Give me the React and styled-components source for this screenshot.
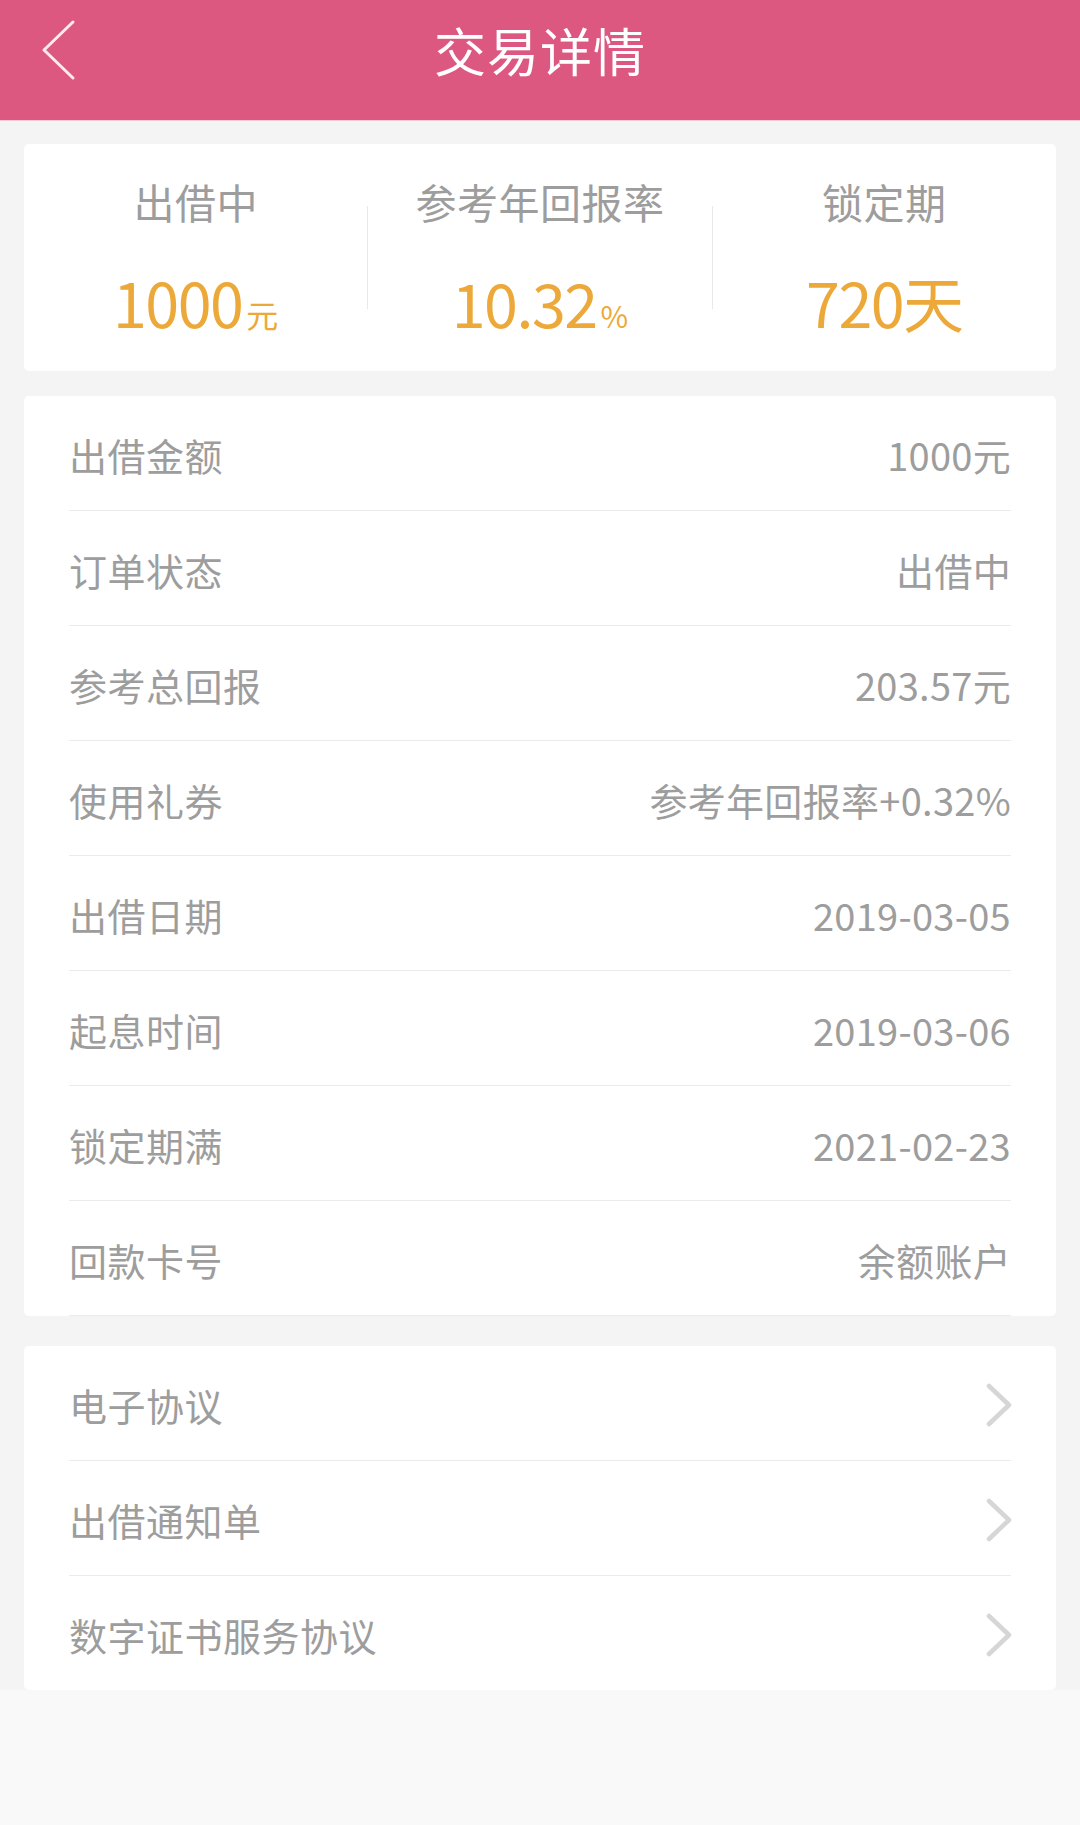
import React from "react";
import styled, { createGlobalStyle } from "styled-components";

const GlobalStyle = createGlobalStyle`
  html, body {
    margin: 0;
    padding: 0;
    background: #f9f9f9;
  }
  body {
    font-family: "Noto Sans CJK SC", "Noto Sans", sans-serif;
    font-weight: 400;
  }
  * { box-sizing: border-box; }
`;

const Page = styled.div`
  width: 1080px;
  min-height: 1825px;
  background: #f9f9f9;
`;

const Header = styled.header`
  height: 121px;
  background: #dd5880;
  display: grid;
  grid-template-columns: 1fr auto 1fr;
  align-items: center;
  padding-bottom: 20px;
  border-bottom: 1px solid #f4c9d6;
`;

const BackButton = styled.button`
  justify-self: start;
  margin-left: 41px;
  padding: 0;
  border: 0;
  background: none;
  width: 36px;
  height: 62px;
  display: flex;
  align-items: center;
  justify-content: center;
  cursor: pointer;
`;

const Title = styled.h1`
  margin: 0;
  font-size: 52px;
  line-height: 1;
  font-weight: 400;
  color: #fff;
  letter-spacing: 1px;
`;

const Main = styled.main`
  background: #f4f4f4;
  padding: 23px 24px 0;
  display: flex;
  flex-direction: column;
`;

const Card = styled.section`
  background: #fff;
  border-radius: 5px;
  margin-bottom: ${(p) => p.$gap || 0}px;
`;

const Summary = styled(Card)`
  height: 227px;
  display: grid;
  grid-template-columns: 1fr 1px 1fr 1px 1fr;
`;

const Stat = styled.div`
  display: flex;
  flex-direction: column;
  align-items: center;
  padding-top: 37px;
`;

const StatLabel = styled.div`
  font-size: 41px;
  line-height: 41px;
  color: #9d9d9d;
  letter-spacing: 0.5px;
`;

const StatValue = styled.div`
  margin-top: 49px;
  font-size: 61px;
  line-height: 61px;
  color: #eca93a;
  white-space: nowrap;
  letter-spacing: -1.5px;
`;

const Unit = styled.span`
  font-size: ${(p) => p.$size || 32}px;
  margin-left: 4px;
  letter-spacing: 0;
`;

const VDivider = styled.div`
  margin-top: 62px;
  height: 103px;
  background: #e8e8e8;
`;

const Row = styled.div`
  height: ${(p) => (p.$last ? 114 : 115)}px;
  margin: 0 45px;
  display: flex;
  align-items: center;
  justify-content: space-between;
  border-bottom: ${(p) => (p.$last ? "none" : "1px solid #ebebeb")};
  font-size: 38px;
  line-height: 1;
  color: #9d9d9d;
  padding-top: 3px;
`;

const RowLabel = styled.span`
  letter-spacing: 0.5px;
`;
const RowValue = styled.span`
  letter-spacing: 0.3px;
`;

const Chevron = styled.svg`
  width: 26px;
  height: 44px;
  margin-right: -1px;
`;

const details = [
  ["出借金额", "1000元"],
  ["订单状态", "出借中"],
  ["参考总回报", "203.57元"],
  ["使用礼券", "参考年回报率+0.32%"],
  ["出借日期", "2019-03-05"],
  ["起息时间", "2019-03-06"],
  ["锁定期满", "2021-02-23"],
  ["回款卡号", "余额账户"],
];

const links = ["电子协议", "出借通知单", "数字证书服务协议"];

export default function App() {
  return (
    <Page>
      <GlobalStyle />
      <Header>
        <BackButton aria-label="返回">
          <svg width="36" height="62" viewBox="0 0 36 62">
            <polyline
              points="32,3 3,31 32,59"
              fill="none"
              stroke="#fde9f0"
              strokeWidth="3"
              strokeLinecap="round"
              strokeLinejoin="round"
            />
          </svg>
        </BackButton>
        <Title>交易详情</Title>
        <div />
      </Header>
      <Main>
        <Summary $gap={25}>
          <Stat>
            <StatLabel>出借中</StatLabel>
            <StatValue>
              1000<Unit>元</Unit>
            </StatValue>
          </Stat>
          <VDivider />
          <Stat>
            <StatLabel>参考年回报率</StatLabel>
            <StatValue>
              10.32<Unit $size={30}>%</Unit>
            </StatValue>
          </Stat>
          <VDivider />
          <Stat>
            <StatLabel>锁定期</StatLabel>
            <StatValue>720天</StatValue>
          </Stat>
        </Summary>
        <Card $gap={30}>
          {details.map(([k, v]) => (
            <Row key={k}>
              <RowLabel>{k}</RowLabel>
              <RowValue>{v}</RowValue>
            </Row>
          ))}
        </Card>
        <Card>
          {links.map((t, i) => (
            <Row key={t} $last={i === links.length - 1}>
              <RowLabel>{t}</RowLabel>
              <Chevron viewBox="0 0 26 44">
                <polyline
                  points="3,3 23,22 3,41"
                  fill="none"
                  stroke="#d6d6d6"
                  strokeWidth="4.5"
                  strokeLinecap="round"
                  strokeLinejoin="round"
                />
              </Chevron>
            </Row>
          ))}
        </Card>
      </Main>
    </Page>
  );
}
